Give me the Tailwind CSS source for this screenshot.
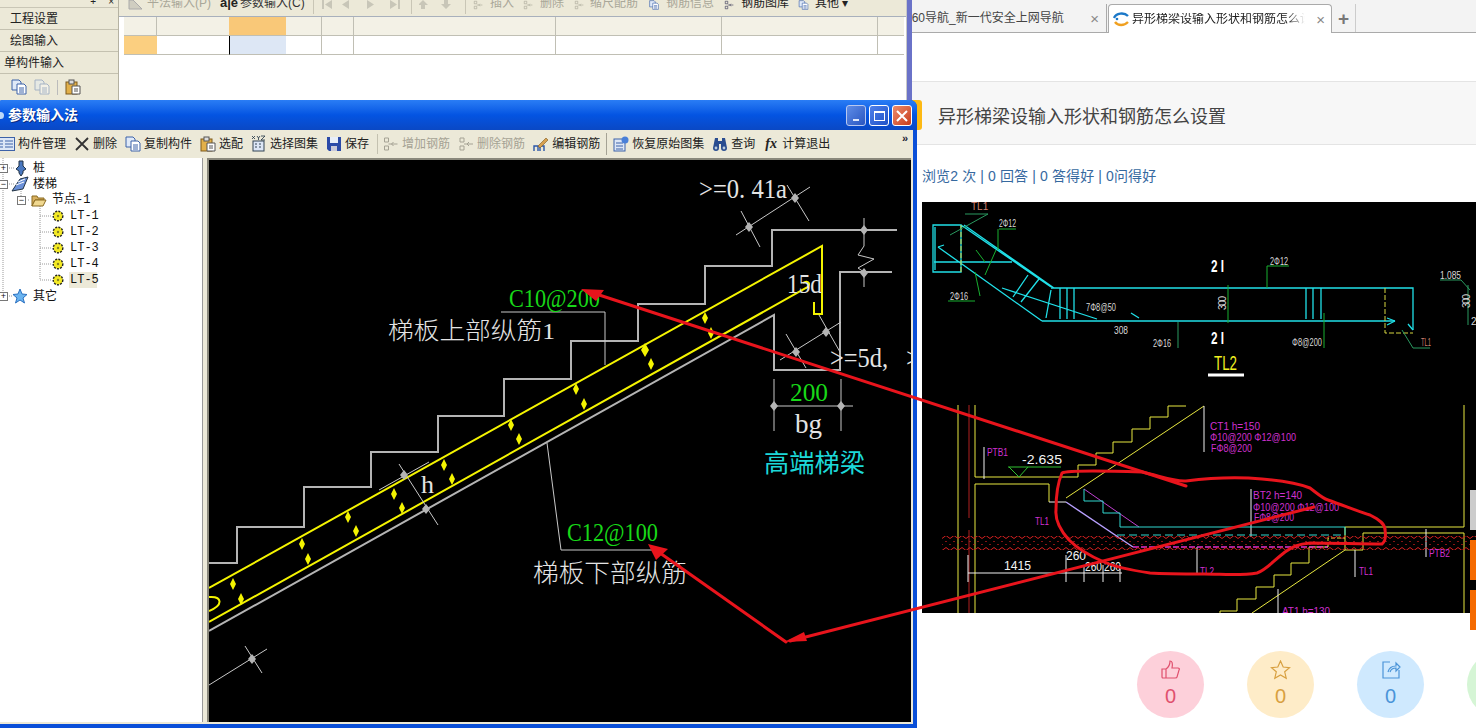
<!DOCTYPE html>
<html lang="zh">
<head>
  <meta charset="UTF-8" />
  <title>参数输入法</title>
  <script src="https://cdn.jsdelivr.net/npm/@tailwindcss/browser@4"></script>
</head>
<body class="bg-white">
<svg width="0" height="0" class="absolute">
  <defs>
    <symbol id="copy" viewBox="0 0 16 16"><path d="M1 1h7l2 2v8H1z" fill="#dfe9f8" stroke="#3d62a8"/><path d="M6 5h7l2 2v8H6z" fill="#fff" stroke="#3d62a8"/><path d="M8 9h5M8 11h5M8 13h5" stroke="#3d62a8"/></symbol>
    <symbol id="paste" viewBox="0 0 16 16"><rect x="1" y="3" width="11" height="12" fill="#e2b04a" stroke="#7d5a1c"/><rect x="4" y="1" width="5" height="4" fill="#ddd" stroke="#555"/><path d="M7 7h8v8H7z" fill="#fff" stroke="#555"/><path d="M9 10h4M9 12h4" stroke="#555"/></symbol>
    <symbol id="dim" viewBox="0 0 16 16"><path d="M2 2h4v4H2zM2 10h4v4H2zM6 8h9M11 6l-2 2 2 2" fill="none" stroke="currentColor"/></symbol>
    <symbol id="gear" viewBox="0 0 12 12"><circle cx="6" cy="6" r="4.800" fill="#f4ea24" stroke-dasharray="2 1.200" stroke-width="1.400" stroke="#222"/><circle cx="6" cy="6" r="1.200" fill="#8a8620"/></symbol>
    <pattern id="wave" patternUnits="userSpaceOnUse" width="8" height="6"><path d="M0 3Q2 0 4 3T8 3" fill="none" stroke="#d42020" stroke-width="1"/></pattern>
  </defs>
</svg>

<div class="relative w-[1476px] h-[728px] overflow-hidden flex font-['Liberation_Sans','Noto_Sans_CJK_SC',sans-serif]">

  <!-- background app -->
  <div class="w-[912px] h-full shrink-0 flex bg-[#ece9d8] border-r-[5px] border-[#6a72c8]">
    <div class="w-[119px] shrink-0 flex flex-col text-[12px] leading-none text-[#222] border-r border-[#b5b2a2]">
      <div class="h-[8px] flex justify-end gap-3 pr-1 overflow-hidden text-[10px] leading-[4px] border-b border-[#c9c6b6]"><span>+</span><span>×</span></div>
      <div class="h-[22px] flex items-center pl-[10px] border-b border-[#c4c1b0]">工程设置</div>
      <div class="h-[22px] flex items-center pl-[10px] border-b border-[#c4c1b0]">绘图输入</div>
      <div class="h-[22px] flex items-center pl-[4px] border-b border-[#c4c1b0]">单构件输入</div>
      <div class="h-[26px] flex items-center gap-[7px] pl-[11px] text-[#888]">
        <svg class="w-[16px] h-[16px]"><use href="#copy"/></svg>
        <svg class="w-[16px] h-[16px] opacity-40"><use href="#copy"/></svg>
        <span class="w-px h-[15px] bg-[#bbb]"></span>
        <svg class="w-[16px] h-[16px]"><use href="#paste"/></svg>
      </div>
    </div>
    <div class="flex-1 flex flex-col min-w-0 border-r border-[#c8c8c8]">
      <div class="h-[17px] shrink-0 overflow-hidden flex items-start text-[12px] leading-none text-[#a9a799] border-b border-[#a8b0bc] whitespace-nowrap">
        <svg class="ml-[8px] w-[16px] h-[10px] shrink-0" viewBox="0 6 16 10"><path d="M2 15h13L6 6H2z" fill="#cfcdc0" stroke="#aaa"/></svg>
        <span class="ml-[4px] -mt-[3px] w-[65px] shrink-0">平法输入(P)</span>
        <span class="ml-[8px] -mt-[4px] w-[15px] font-bold text-[#222] text-[13px] shrink-0">a|e</span>
        <span class="ml-[5px] -mt-[3px] w-[64px] text-[#333] shrink-0">参数输入(C)</span>
        <span class="ml-[9px] w-px h-[14px] bg-[#c9c6b6] shrink-0"></span>
        <svg class="ml-[8px] w-[81px] h-[10px] shrink-0" viewBox="0 0 81 10" fill="#c8c6b8"><path d="M0 0h2v9H0zM10 0v9L3 4.500zM27 0v9l-7-4.500zM45 0v9l7-4.500zM68 0v9l7-4.500zM76 0h2v9h-2z"/></svg>
        <span class="ml-[8px] w-px h-[14px] bg-[#c9c6b6] shrink-0"></span>
        <svg class="ml-[7px] w-[36px] h-[10px] shrink-0" viewBox="0 0 36 10" fill="#c8c6b8"><path d="M4 0l5 5H6v4H2V5H-1zM27 9l-5-5h3V0h4v4h3z"/></svg>
        <span class="ml-[10px] w-px h-[14px] bg-[#c9c6b6] shrink-0"></span>
        <svg class="ml-[4px] w-[16px] h-[10px] shrink-0"><use href="#dim"/></svg>
        <span class="ml-[4px] -mt-[3px] w-[24px] shrink-0">插入</span>
        <svg class="ml-[6px] w-[16px] h-[10px] shrink-0"><use href="#dim"/></svg>
        <span class="ml-[4px] -mt-[3px] w-[24px] shrink-0">删除</span>
        <svg class="ml-[8px] w-[14px] h-[10px] shrink-0"><use href="#dim"/></svg>
        <span class="ml-[4px] -mt-[3px] w-[48px] shrink-0">缩尺配筋</span>
        <svg class="ml-[8px] w-[16px] h-[10px] shrink-0"><use href="#copy"/></svg>
        <span class="ml-[4px] -mt-[3px] w-[48px] shrink-0">钢筋信息</span>
        <svg class="ml-[8px] w-[14px] h-[10px] shrink-0 text-[#335]"><use href="#dim"/></svg>
        <span class="ml-[5px] -mt-[3px] w-[48px] text-[#222] shrink-0">钢筋图库</span>
        <svg class="ml-[7px] w-[15px] h-[10px] shrink-0"><use href="#copy"/></svg>
        <span class="ml-[4px] -mt-[3px] text-[#222] shrink-0">其他 ▾</span>
      </div>
      <div class="flex-1 bg-white pl-[5px]">
        <div class="grid grid-cols-[33px_72px_57px_36px_32px_202px_166px_156px_26px] grid-rows-[19px_19px] w-[780px]">
          <div class="bg-[#f3f1e6] border-r border-b border-[#c0bfb4]"></div><div class="bg-[#f3f1e6] border-b border-[#c0bfb4]"></div><div class="bg-[#f9c878] border-b border-[#c0bfb4]"></div><div class="bg-[#f3f1e6] border-r border-b border-[#c0bfb4]"></div><div class="bg-[#f3f1e6] border-r border-b border-[#c0bfb4]"></div><div class="bg-[#f3f1e6] border-r border-b border-[#c0bfb4]"></div><div class="bg-[#f3f1e6] border-r border-b border-[#c0bfb4]"></div><div class="bg-[#f3f1e6] border-r border-b border-[#c0bfb4]"></div><div class="bg-[#f3f1e6] border-b border-[#c0bfb4]"></div>
          <div class="bg-[#fbcf80] border-b border-[#c0bfb4]"></div><div class="border-b border-[#c0bfb4]"></div><div class="bg-[#dde7f5] border-l border-l-black border-b border-[#c0bfb4]"></div><div class="border-r border-b border-[#c0bfb4]"></div><div class="border-r border-b border-[#c0bfb4]"></div><div class="border-r border-b border-[#c0bfb4]"></div><div class="border-r border-b border-[#c0bfb4]"></div><div class="border-r border-b border-[#c0bfb4]"></div><div class="border-b border-[#c0bfb4]"></div>
        </div>
      </div>
    </div>
  </div>

  <!-- browser side -->
  <div class="flex-1 min-w-0 flex flex-col bg-white">
    <div class="h-[33px] shrink-0 bg-[#f3f3f3] border-b border-[#aaa] flex items-end text-[12px] leading-none whitespace-nowrap">
      <div class="w-[195px] h-[28px] shrink-0 flex items-center justify-between text-[#444] overflow-hidden border-r border-[#aaa] pr-[7px]">
        <span class="-ml-[7px]">360导航_新一代安全上网导航</span><span class="text-[#888] text-[15px]">×</span>
      </div>
      <div class="w-[224px] h-[29px] shrink-0 ml-[1px] -mb-px bg-white rounded-t-[4px] border border-b-0 border-[#aaa] flex items-center pl-[4px] pr-[6px] text-[#222]">
        <svg class="w-[16px] h-[16px] shrink-0" viewBox="0 0 16 16"><path d="M1 7C3 2 11 1 15 5" fill="none" stroke="#1b78c8" stroke-width="2.4"/><path d="M2 11C5 15 11 15 15 11" fill="none" stroke="#f0a020" stroke-width="2.4"/><circle cx="4" cy="8" r="1.3" fill="#1b78c8"/></svg>
        <span class="ml-[3px] w-[173px] overflow-hidden [mask-image:linear-gradient(to_right,black_90%,transparent)]">异形梯梁设输入形状和钢筋怎么设</span>
        <span class="ml-auto text-[#888] text-[15px]">×</span>
      </div>
      <div class="w-[24px] h-[28px] shrink-0 flex items-center justify-center text-[#777] text-[19px] font-bold border-r border-[#ccc]">+</div>
    </div>
    <div class="h-[48px] shrink-0"></div>
    <div class="h-[64px] shrink-0 bg-[#f7f7f7] border-y border-[#e4e4e4] flex items-center pl-[26px] pt-[9px] text-[18px] text-[#444]">异形梯梁设输入形状和钢筋怎么设置</div>
    <div class="h-[57px] shrink-0 pl-[10px] pt-[21px] text-[14px] leading-[20px] tracking-[0.12px] text-[#36699f] whitespace-nowrap">浏览2 次 | 0 回答 | 0 答得好 | 0问得好</div>

    <!-- question picture -->
    <div class="ml-[10px] h-[411px] shrink-0 bg-black">
      <svg class="block font-['Liberation_Sans','Noto_Sans_CJK_SC',sans-serif]" width="554" height="411" viewBox="922 202 554 411" fill="none">
        <!-- TL2 beam -->
        <g stroke="#20e0e8" stroke-width="1.300">
          <path d="M933 225h28v47h-28zM935 227v43M961 225L1051 287M964 225L1054 288M1051 288H1413V330M1042 321H1395M938 247L1042 321M934 262H1012M1002 288L1097 319M1060 288V319M1067 288V319M1074 288V319M1306 288V319M1313 288V319M1321 288V319M1028 275L1013 297M1039 279L1021 302M1051 290L1046 318M1131 313L1139 318"/>
          <path d="M1395 321l-8 -3M1395 321l-8 4M1413 330l-5 -6M938 247l6 -2" />
        </g>
        <g stroke="#18b030" stroke-width="1">
          <path d="M999 229h17M998 229L998 250M948 301h27M1267 266h22M1267 266v22M1228 285v38M1324 313v35M976 250L985 262M975 272L980 296M996 250L985 275"/>
        </g>
        <path d="M961 225v47M1385 288v45h28" stroke="#d6d640" stroke-width="1" stroke-dasharray="5 2"/>
        <path d="M1178 322v26M1402 330L1413 348H1430M965 214H988L950 235M1440 280H1461L1470 290M1468 285V325" stroke="#2a9a60" stroke-width="1"/>
        <g font-size="10" fill="#d8d8d8">
          <text x="971" y="210" fill="#d08070" font-size="10">TL1</text>
          <text x="999" y="227" textLength="17" lengthAdjust="spacingAndGlyphs">2Φ12</text>
          <text x="950" y="300" textLength="18" lengthAdjust="spacingAndGlyphs">2Φ16</text>
          <text x="1086" y="311" textLength="30" lengthAdjust="spacingAndGlyphs">7Φ8@50</text>
          <text x="1270" y="265" textLength="18" lengthAdjust="spacingAndGlyphs">2Φ12</text>
          <text x="1114" y="334" textLength="14" lengthAdjust="spacingAndGlyphs">308</text>
          <text x="1153" y="347" textLength="18" lengthAdjust="spacingAndGlyphs">2Φ16</text>
          <text x="1292" y="346" textLength="30" lengthAdjust="spacingAndGlyphs">Φ8@200</text>
          <text x="1421" y="346" fill="#d08070" textLength="10" lengthAdjust="spacingAndGlyphs">TL1</text>
          <text x="1440" y="279" textLength="21" lengthAdjust="spacingAndGlyphs">1.085</text>
          <text transform="translate(1226 310) rotate(-90)" textLength="14">300</text>
          <text transform="translate(1470 308) rotate(-90)" textLength="14">300</text>
          <text x="1471" y="325">2</text>
        </g>
        <g fill="#fff" font-size="16" font-weight="700">
          <text x="1211" y="272" textLength="13" lengthAdjust="spacingAndGlyphs">2 I</text>
          <text x="1211" y="344" textLength="13" lengthAdjust="spacingAndGlyphs">2 I</text>
        </g>
        <text x="1214" y="370" fill="#f0f020" font-size="20" textLength="23" lengthAdjust="spacingAndGlyphs">TL2</text>
        <path d="M1208 375h36" stroke="#fff" stroke-width="3"/>

        <!-- stair section -->
        <path d="M958 405V613M975 405V477H1078V465H1096V453H1113V442H1132V429H1150V417H1168V406H1186M975 613V484H1049V502M1345 527H1464V405M1363 550V533H1464V613M1345 527V550H1363M1328 547H1309V563H1291V575H1274V587H1256V599H1237V611H1220V613M1066 498L1204 406M1345 550L1252 613" stroke="#e8e840" stroke-width="1"/>
        <path d="M969 405V518M969 530V613" stroke="#b02020" stroke-width="1"/>
        <path d="M1008 467H1061M1009 467L1019 477L1028 467" stroke="#30c030" stroke-width="1"/>
        <path d="M1204 406V452M984 447V479M1049 502H1066M1251 489V537M968 573H1122M968 555V582M1066 555V582M1084 565V582M1103 565V582M1120 565V582M1197 547V575M1355 550V577M1426 529V557M1278 589V613" stroke="#f0f0f0" stroke-width="1"/>
        <path d="M1066 502L1133 547" stroke="#b8a0ff" stroke-width="1.4"/>
        <path d="M1084 489L1139 527" stroke="#c040d0" stroke-width="1"/>
        <path d="M1084 489V501H1103V513H1120V527H1345" stroke="#30d8d0" stroke-width="1"/>
        <path d="M1117 535H1345V527" stroke="#30d8d0" stroke-width="1" stroke-dasharray="8 4"/>
        <path d="M1133 547H1328" stroke="#e030d0" stroke-width="1.4" stroke-dasharray="6 2"/>
        <path d="M1328 547V538H1345" stroke="#e8e840" stroke-width="1" stroke-dasharray="4 2"/>
        <rect x="942" y="536" width="534" height="6" fill="url(#wave)"/>
        <rect x="942" y="544" width="534" height="6" fill="url(#wave)"/>
        <g font-size="11" fill="#d030d0">
          <text x="1210" y="430" textLength="50" lengthAdjust="spacingAndGlyphs">CT1 h=150</text>
          <text x="1210" y="441" textLength="86" lengthAdjust="spacingAndGlyphs">Φ10@200 Φ12@100</text>
          <text x="1211" y="452" textLength="41" lengthAdjust="spacingAndGlyphs">FΦ8@200</text>
          <text x="987" y="456" textLength="21" lengthAdjust="spacingAndGlyphs">PTB1</text>
          <text x="1035" y="525" textLength="14" lengthAdjust="spacingAndGlyphs">TL1</text>
          <text x="1253" y="499" textLength="49" lengthAdjust="spacingAndGlyphs">BT2 h=140</text>
          <text x="1253" y="511" textLength="86" lengthAdjust="spacingAndGlyphs">Φ10@200 Φ12@100</text>
          <text x="1254" y="521" textLength="40" lengthAdjust="spacingAndGlyphs">FΦ8@200</text>
          <text x="1200" y="575" textLength="14" lengthAdjust="spacingAndGlyphs">TL2</text>
          <text x="1359" y="575" textLength="14" lengthAdjust="spacingAndGlyphs">TL1</text>
          <text x="1429" y="557" textLength="21" lengthAdjust="spacingAndGlyphs">PTB2</text>
          <text x="1282" y="615" textLength="48" lengthAdjust="spacingAndGlyphs">AT1 h=130</text>
        </g>
        <g font-size="13" fill="#f4f4f4">
          <text x="1022" y="464" textLength="40" lengthAdjust="spacingAndGlyphs">-2.635</text>
          <text x="1004" y="570" textLength="27" lengthAdjust="spacingAndGlyphs">1415</text>
          <text x="1066" y="560" textLength="20" lengthAdjust="spacingAndGlyphs">260</text>
          <text x="1085" y="571" textLength="17" lengthAdjust="spacingAndGlyphs">260</text>
          <text x="1104" y="571" textLength="17" lengthAdjust="spacingAndGlyphs">260</text>
        </g>
      </svg>
    </div>

    <div class="flex-1 flex items-start gap-[43px] pl-[225px] pt-[38px] text-[20px] leading-none">
      <div class="w-[67px] h-[67px] shrink-0 rounded-full bg-[#fdd0da] flex flex-col items-center pt-[9px] text-[#e0506e]">
        <svg class="w-[20px] h-[20px]" viewBox="0 0 20 20" fill="none" stroke="currentColor" stroke-width="1.2"><path d="M1 9h4v9H2a1 1 0 0 1-1-1zM5 9c3-2 4-4 4-8 2 0 3 2 2 7h6c1 0 2 1 1 2l-2 7c0 1-1 1-2 1H5"/></svg>
        <span class="mt-[6px]">0</span>
      </div>
      <div class="w-[67px] h-[67px] shrink-0 rounded-full bg-[#feecc8] flex flex-col items-center pt-[9px] text-[#d8a040]">
        <svg class="w-[21px] h-[20px]" viewBox="0 0 20 20" fill="none" stroke="currentColor" stroke-width="1.2"><path d="M10 1l2.7 6 6.3.6-4.8 4.2 1.5 6.4L10 15l-5.7 3.2 1.5-6.4L1 7.6 7.3 7z"/></svg>
        <span class="mt-[6px]">0</span>
      </div>
      <div class="w-[67px] h-[67px] shrink-0 rounded-full bg-[#cfe9fe] flex flex-col items-center pt-[9px] text-[#4b94d8]">
        <svg class="w-[20px] h-[20px]" viewBox="0 0 20 20" fill="none" stroke="currentColor" stroke-width="1.2"><path d="M9 2H2v16h16v-8M7 12c1-4 4-6 8-6V3l4 4-4 4V8c-3 0-5 1-6 4"/></svg>
        <span class="mt-[6px]">0</span>
      </div>
      <div class="w-[67px] h-[67px] shrink-0 rounded-full bg-[#d5f5d5]"></div>
    </div>
  </div>

  <!-- yellow accent behind the dialog, side widgets -->
  <div class="absolute left-[910px] top-[100px] w-[12px] h-[30px] rounded-[3px] bg-[#fdb913]"></div>
  <div class="absolute left-[1470px] top-[490px] w-[6px] h-[40px] bg-[#cccccc]"></div>
  <div class="absolute left-[1470px] top-[540px] w-[6px] h-[40px] bg-[#f56a00]"></div>
  <div class="absolute left-[1470px] top-[590px] w-[6px] h-[40px] bg-[#f56a00]"></div>

  <!-- dialog window -->
  <div class="absolute -left-[4px] top-[100px] w-[921px] h-[628px] flex flex-col rounded-t-[7px] bg-[#0a4fd8] pl-[4px] pr-[4px] pb-[4px]">
    <div class="h-[30px] shrink-0 -mx-[4px] pl-[1px] pr-[5px] flex items-center rounded-t-[7px] bg-gradient-to-b from-[#2a7df5] via-[#0454e2] to-[#0a48c4]">
      <span class="w-[7px] h-[7px] rounded-full bg-[#bcd8f8] shrink-0"></span>
      <span class="ml-[4px] text-white font-bold text-[14px] leading-none [text-shadow:1px_1px_0_#0a2c80]">参数输入法</span>
      <div class="ml-auto flex gap-[3px] pt-[1px]">
        <div class="w-[20px] h-[21px] rounded-[3px] border border-[#b8c8f0] bg-gradient-to-br from-[#5f8de8] to-[#2a55c0] flex items-end justify-start pl-[6px] pb-[4px]"><span class="w-[6px] h-[2px] bg-[#dfe8fb]"></span></div>
        <div class="w-[20px] h-[21px] rounded-[3px] border border-white bg-gradient-to-br from-[#4f80ea] to-[#1f52c8] flex items-center justify-center"><span class="w-[11px] h-[10px] border border-t-2 border-white"></span></div>
        <div class="w-[20px] h-[21px] rounded-[3px] border border-white bg-gradient-to-br from-[#ec8a6a] to-[#c83a18] flex items-center justify-center">
          <svg class="w-[12px] h-[12px]" viewBox="0 0 12 12" stroke="#fff" stroke-width="2"><path d="M1 1l10 10M11 1L1 11"/></svg>
        </div>
      </div>
    </div>
    <div class="flex-1 min-h-0 flex flex-col bg-[#ece9d8]">
      <div class="relative h-[27px] shrink-0 flex items-center gap-[8px] text-[12px] leading-none text-[#222] whitespace-nowrap -ml-px">
        <div class="flex items-center gap-[3px]"><svg class="w-[16px] h-[14px]" viewBox="0 0 16 14"><rect x=".5" y=".5" width="15" height="13" fill="#dce6f6" stroke="#3d62a8"/><path d="M6 4h8M6 7h8M6 10h8M1 4h3M1 7h3M1 10h3" stroke="#3d62a8"/></svg>构件管理</div>
        <div class="flex items-center gap-[3px]"><svg class="w-[16px] h-[16px]" viewBox="0 0 16 16" stroke="#333" stroke-width="1.8"><path d="M2 2l12 12M14 2L2 14"/></svg>删除</div>
        <div class="flex items-center gap-[3px]"><svg class="w-[16px] h-[16px]"><use href="#copy"/></svg>复制构件</div>
        <div class="flex items-center gap-[3px]"><svg class="w-[16px] h-[16px]"><use href="#paste"/></svg>选配</div>
        <div class="flex items-center gap-[3px]"><svg class="w-[16px] h-[17px]" viewBox="0 0 16 17"><path d="M1 1l3 3M4 1L1 4M6 1l1.500 2V5M9 1L7.500 3M10 1h4l-4 4h4" stroke="#234" stroke-width=".8" fill="none"/><rect x="2" y="6" width="11" height="10" fill="#dce6f6" stroke="#345"/><path d="M4 9h2M8 9h2M4 12h2M8 12h2" stroke="#345"/></svg>选择图集</div>
        <div class="flex items-center gap-[3px]"><svg class="w-[16px] h-[16px]" viewBox="0 0 16 16"><path d="M1 1h14v14H3l-2-2z" fill="#2b4aa8"/><rect x="4" y="1" width="8" height="6" fill="#e8eef8"/><rect x="5" y="10" width="6" height="5" fill="#c8c8d8"/></svg>保存</div>
        <span class="w-px h-[20px] bg-[#c4c1b0]"></span>
        <div class="flex items-center gap-[3px] text-[#a5a294] -ml-[4px]"><svg class="w-[17px] h-[16px]"><use href="#dim"/></svg>增加钢筋</div>
        <div class="flex items-center gap-[3px] text-[#a5a294]"><svg class="w-[16px] h-[16px]"><use href="#dim"/></svg>删除钢筋</div>
        <div class="flex items-center gap-[3px]"><svg class="w-[16px] h-[16px]" viewBox="0 0 16 16" fill="none"><path d="M1 15v-5h4v5M7 15v-5h4v5" stroke="#2a55a8" stroke-width="1.4"/><path d="M5 10L13 2l2 2-8 8z" fill="#d8a050" stroke="#7d5a1c" stroke-width=".6"/></svg>编辑钢筋</div>
        <span class="-ml-[2px] w-px h-[22px] bg-[#a5a294]"></span>
        <div class="-ml-[2px] flex items-center gap-[3px]"><svg class="w-[16px] h-[16px]" viewBox="0 0 16 16"><rect x="1" y="3" width="11" height="12" fill="#dce6f6" stroke="#3d62a8"/><path d="M3 7h7M3 10h7M3 13h7" stroke="#3d62a8"/><circle cx="12" cy="4" r="3.5" fill="#4a80d8"/></svg>恢复原始图集</div>
        <div class="flex items-center gap-[3px]"><svg class="w-[16px] h-[16px]" viewBox="0 0 16 16" fill="#2a4d90"><path d="M3 2h3v3h4V2h3l2 10a3 3 0 0 1-6 0V8H7v4a3 3 0 0 1-6 0z"/><circle cx="4" cy="12" r="1.4" fill="#bcd"/><circle cx="12" cy="12" r="1.4" fill="#bcd"/></svg>查询</div>
        <div class="flex items-center gap-[3px]"><span class="w-[16px] text-center font-['Liberation_Serif',serif] italic font-bold text-[14px]">fx</span>计算退出</div>
        <span class="absolute left-[903px] top-[3px] font-bold text-[11px] text-[#223]">»</span>
      </div>
      <div class="flex-1 min-h-0 flex pt-[1px] pb-[2px]">
        <!-- tree -->
        <div class="relative w-[203px] shrink-0 mr-[4px] bg-white border-r border-[#999] text-[12px] leading-[16px] text-[#111] whitespace-nowrap overflow-hidden">
          <svg class="absolute left-0 top-0" width="60" height="150" fill="none" stroke="#999" stroke-dasharray="1 1"><path d="M3 0V138M3 10H14M3 26H14M21 33V42M40 48V122M3 138H12M28 42H30M40 58H52M40 74H52M40 90H52M40 106H52M40 122H52"/></svg>
          <div class="relative flex items-center h-[16px] mt-[2px]"><span class="absolute -left-[1px] w-[9px] h-[9px] border border-[#777] bg-white text-[9px] leading-[7px] text-center">+</span>
            <svg class="absolute left-[14px] w-[14px] h-[16px]" viewBox="0 0 14 16"><path d="M5 1h4v5l3 3-3 2v2l-2 3-2-3v-2L2 9l3-3z" fill="#4a78c0" stroke="#234"/></svg>
            <span class="ml-[33px]">桩</span></div>
          <div class="relative flex items-center h-[16px]"><span class="absolute -left-[1px] w-[9px] h-[9px] border border-[#777] bg-white text-[9px] leading-[7px] text-center">−</span>
            <svg class="absolute left-[11px] w-[18px] h-[16px]" viewBox="0 0 18 16"><path d="M1 15L9 3l8-2-5 12z" fill="#6a90d8" stroke="#234"/><path d="M5 9l8-3M7 6l7-3" stroke="#fff"/></svg>
            <span class="ml-[33px]">楼梯</span></div>
          <div class="relative flex items-center h-[16px]"><span class="absolute left-[17px] w-[9px] h-[9px] border border-[#777] bg-white text-[9px] leading-[7px] text-center">−</span>
            <svg class="absolute left-[31px] w-[16px] h-[14px]" viewBox="0 0 16 14"><path d="M1 3h5l1 2h6v2H4l-3 6z" fill="#d8b060" stroke="#8a6a20"/><path d="M4 7h11l-3 6H1z" fill="#f0d890" stroke="#8a6a20"/></svg>
            <span class="ml-[52px] font-['Liberation_Mono','Noto_Sans_CJK_SC',monospace]">节点-1</span></div>
          <div class="relative flex items-center h-[16px] pl-[70px] font-['Liberation_Mono',monospace]"><svg class="absolute left-[52px] w-[12px] h-[12px]"><use href="#gear"/></svg>LT-1</div>
          <div class="relative flex items-center h-[16px] pl-[70px] font-['Liberation_Mono',monospace]"><svg class="absolute left-[52px] w-[12px] h-[12px]"><use href="#gear"/></svg>LT-2</div>
          <div class="relative flex items-center h-[16px] pl-[70px] font-['Liberation_Mono',monospace]"><svg class="absolute left-[52px] w-[12px] h-[12px]"><use href="#gear"/></svg>LT-3</div>
          <div class="relative flex items-center h-[16px] pl-[70px] font-['Liberation_Mono',monospace]"><svg class="absolute left-[52px] w-[12px] h-[12px]"><use href="#gear"/></svg>LT-4</div>
          <div class="relative flex items-center h-[16px] pl-[70px] font-['Liberation_Mono',monospace]"><svg class="absolute left-[52px] w-[12px] h-[12px]"><use href="#gear"/></svg><span class="-ml-px px-px w-[28px] bg-[#ece9d8]">LT-5</span></div>
          <div class="relative flex items-center h-[16px]"><span class="absolute -left-[1px] w-[9px] h-[9px] border border-[#777] bg-white text-[9px] leading-[7px] text-center">+</span>
            <svg class="absolute left-[12px] w-[16px] h-[16px]" viewBox="0 0 16 16"><path d="M8 1l2 5 5 .5-4 3.5 1.5 5L8 12l-4.500 3L5 10 1 6.500 6 6z" fill="#6ab4f0" stroke="#2a70c0"/></svg>
            <span class="ml-[33px]">其它</span></div>
        </div>

        <!-- drawing -->
        <div class="flex-1 min-w-0 mr-[2px] bg-black border-l-2 border-t-2 border-[#8a887c] overflow-hidden">
          <svg class="block font-['Liberation_Serif','Noto_Sans_CJK_SC',serif]" width="703" height="562" viewBox="209 160 703 562" fill="none">
            <path d="M209 563H237V527H304V487H371V452H438V416H504V379H571V341H638V304H705V266H772V230H897" stroke="#b4b4b4" stroke-width="2"/>
            <path d="M209 631L774 315V370H840V272H892" stroke="#b4b4b4" stroke-width="2"/>
            <path d="M209 588L822 246V314H814V302" stroke="#f4f400" stroke-width="2"/>
            <path d="M209 622L806 288C812 285 808 279 803 283" stroke="#f4f400" stroke-width="2"/>
            <path d="M209 597C222 596 224 605 209 611" stroke="#f4f400" stroke-width="2"/>
            <path d="M864 218V246L858 255L874 259L858 268L864 272V287M736 235L810 187M741 211L760 247M787 185L809 221M780 360L841 322M786 334L806 368M819 315L840 352M774 379V431M841 379V431M774 406H853M501 312H605V365M547 443L561 550H653M379 490L429 462M399 464L438 525M209 685L267 649M245 646L262 673" stroke="#c8c8c8" stroke-width="1"/>
            <g fill="#b4b4b4">
              <path d="M864 225l4 5-4 5-4-5zM864 268l4 5-4 5-4-5zM749 222l4 5-4 5-4-5zM795 193l4 5-4 5-4-5zM796 347l4 5-4 5-4-5zM826 327l4 5-4 5-4-5zM774 401l4 5-4 5-4-5zM841 401l4 5-4 5-4-5zM404 470l4 5-4 5-4-5zM426 504l4 5-4 5-4-5zM252 654l4 5-4 5-4-5z"/>
            </g>
            <path fill="#f4f400" d="M705 312l3 6-3 6-3-6zM711 327l3 6-3 6-3-6zM645 343l4 7-4 7-4-7zM651 358l3 6-3 6-3-6zM576 383l3 6-3 6-3-6zM584 398l3 6-3 6-3-6zM511 419l3 6-3 6-3-6zM519 433l3 6-3 6-3-6zM444 459l3 6-3 6-3-6zM452 473l3 6-3 6-3-6zM394 488l3 6-3 6-3-6zM402 502l3 6-3 6-3-6zM348 511l3 6-3 6-3-6zM356 525l3 6-3 6-3-6zM302 538l3 6-3 6-3-6zM308 553l3 6-3 6-3-6zM233 578l3 6-3 6-3-6zM241 593l3 6-3 6-3-6z"/>
            <g fill="#e4e4e4">
              <text x="699" y="198" font-size="27" textLength="88" lengthAdjust="spacingAndGlyphs">&gt;=0. 41a</text>
              <text x="787" y="293" font-size="27" textLength="35" lengthAdjust="spacingAndGlyphs">15d</text>
              <text x="830" y="367" font-size="27" textLength="58" lengthAdjust="spacingAndGlyphs">&gt;=5d,</text>
              <text x="906" y="367" font-size="27">&gt;</text>
              <text x="795" y="433" font-size="27" textLength="27" lengthAdjust="spacingAndGlyphs">bg</text>
              <text x="421" y="493" font-size="25" textLength="13" lengthAdjust="spacingAndGlyphs">h</text>
              <text x="388" y="339" font-size="24" font-weight="300" textLength="167" lengthAdjust="spacingAndGlyphs">梯板上部纵筋1</text>
              <text x="533" y="582" font-size="25" font-weight="300" textLength="154" lengthAdjust="spacingAndGlyphs">梯板下部纵筋</text>
            </g>
            <g fill="#18d818" font-size="26">
              <text x="509" y="307" textLength="91" lengthAdjust="spacingAndGlyphs">C10@200</text>
              <text x="790" y="401" textLength="38" lengthAdjust="spacingAndGlyphs">200</text>
              <text x="567" y="541" textLength="91" lengthAdjust="spacingAndGlyphs">C12@100</text>
            </g>
            <text x="764" y="472" fill="#1cd8d8" font-size="25" textLength="101" lengthAdjust="spacingAndGlyphs">高端梯梁</text>
          </svg>
        </div>
      </div>
    </div>
  </div>

  <!-- red annotations drawn over everything -->
  <svg class="absolute left-0 top-0 pointer-events-none" width="1476" height="728" viewBox="0 0 1476 728" fill="none">
    <g stroke="#e8141c" stroke-width="3" stroke-linejoin="round" stroke-linecap="round">
      <path d="M590 292L1186 486"/>
      <path d="M1314 507L790 641"/>
      <path d="M786 642L660 553"/>
      <path d="M1062 473C1068 470 1110 471 1142 472C1160 476 1175 482 1186 481C1210 478 1240 477 1262 479C1285 481 1300 484 1310 488C1318 494 1322 498 1328 500C1345 506 1360 512 1370 515C1380 520 1385 524 1385 530C1386 536 1386 541 1382 544C1360 544 1335 543 1310 543C1298 544 1292 547 1285 552C1272 562 1266 570 1257 573C1240 576 1222 574 1204 574C1185 574 1165 574 1150 573C1130 570 1115 567 1104 562C1090 556 1078 549 1069 540C1060 530 1055 520 1056 510C1056 495 1058 482 1062 473Z"/>
    </g>
    <path fill="#e8141c" d="M581 289L604 290L596 301zM784 642L804 632L807 641zM648 544L668 549L656 560z"/>
  </svg>
</div>
</body>
</html>
